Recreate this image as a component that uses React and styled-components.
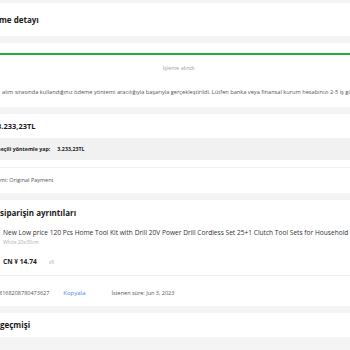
import React from "react";
import styled, { createGlobalStyle } from "styled-components";

const GlobalStyle = createGlobalStyle`
  body {
    margin: 0;
    font-family: "Open Sans", "Liberation Sans", sans-serif;
    background: #f4f4f4;
  }
`;

// the page is wider than the window: its left part is cut off
const Viewport = styled.div`
  width: 350px;
  height: 350px;
  overflow: hidden;
  background: #f4f4f4;
`;

const Page = styled.div`
  padding-top: 3px;
  display: flex;
  flex-direction: column;
  gap: 7px;
`;

const Card = styled.section`
  background: #fff;
  display: flex;
  flex-direction: column;
  padding-top: ${(p) => p.$top || "0"};
  height: ${(p) => p.$h || "auto"};
  box-sizing: border-box;
`;

// text that sits left of the window edge
const Lead = styled.span`
  display: inline-flex;
  justify-content: flex-end;
  width: 0;
  white-space: nowrap;
`;

const Line = styled.div`
  margin-left: ${(p) => p.$x || "0"};
  white-space: nowrap;
`;

const Title = styled(Line)`
  font-size: 8px;
  font-weight: 700;
  color: #1a1a1a;
  line-height: ${(p) => p.$lh || "33px"};
`;

const GreenLine = styled.div`
  height: 2px;
  background: #1fb33c;
`;

const StepLabel = styled.div`
  margin-top: 9px;
  text-align: center;
  padding-left: 7px;
  font-size: 5.5px;
  line-height: 8px;
  color: #a3a3a3;
`;

const Note = styled(Line)`
  margin-top: 16px;
  font-size: 5.65px;
  line-height: 8px;
  color: #555;
`;

const Amount = styled(Line)`
  font-size: 7.5px;
  font-weight: 700;
  color: #1a1a1a;
  line-height: 24px;
`;

const ShadedRow = styled.div`
  display: flex;
  align-items: center;
  height: 22px;
  background: #f1f1f1;
  font-size: 5.3px;
  font-weight: 700;
  color: #222;
  white-space: nowrap;
`;

const RowValue = styled.span`
  margin-left: ${(p) => p.$x};
`;

const Divider = styled.div`
  height: 1px;
  margin-top: ${(p) => p.$mt || "0"};
  background: #f0f0f0;
`;

const InfoLine = styled(Line)`
  display: flex;
  align-items: center;
  height: ${(p) => p.$h || "24px"};
  padding-top: ${(p) => p.$top || "0"};
  box-sizing: border-box;
  font-size: 5.5px;
  color: #555;
`;

const Product = styled.div`
  display: flex;
  gap: 8px;
  margin: 1px 0 0 -53px;
`;

const Thumb = styled.div`
  width: 48px;
  height: 48px;
  flex: none;
  background: #eee;
`;

const ProductInfo = styled.div`
  display: flex;
  flex-direction: column;
`;

const ProductName = styled.div`
  font-size: 6.6px;
  color: #333;
  white-space: nowrap;
  line-height: 11px;
`;

const Variant = styled.div`
  font-size: 5px;
  color: #b0b0b0;
  line-height: 9px;
`;

const PriceRow = styled.div`
  display: flex;
  align-items: baseline;
  gap: 12px;
  margin-top: 10px;
  line-height: 9px;
`;

const Price = styled.span`
  font-size: 6.6px;
  font-weight: 700;
  color: #222;
`;

const Qty = styled.span`
  font-size: 5px;
  color: #aaa;
`;

const Copy = styled.span`
  margin: 0 26px 0 14px;
  font-size: 6px;
  color: #4d86e8;
`;

export default function App() {
  return (
    <>
      <GlobalStyle />
      <Viewport>
        <Page>
          <Card $h="33px">
            <Title $x="-1px">
              <Lead>Geri öde</Lead>me detayı
            </Title>
          </Card>

          <Card $top="10px" $h="64px">
            <GreenLine />
            <StepLabel>İşleme alındı</StepLabel>
            <Note $x="2px">
              <Lead>Geri ödemeniz,{"\u00a0\u00a0"}</Lead>alım sırasında kullandığınız ödeme yöntemi aracılığıyla başarıyla
              gerçekleştirildi. Lütfen banka veya finansal kurum hesabınızı 2-5 iş günü içinde kontrol edin.
            </Note>
          </Card>

          <Card $h="79px">
            <Amount $x="-3px">
              <Lead>Geri ödeme tutarı:{"\u00a0"}</Lead>3.233,23TL
            </Amount>
            <ShadedRow>
              <Line $x="-2px">
                <Lead>Geri ödemeyi{"\u00a0"}</Lead>seçili yöntemle yap:
              </Line>
              <RowValue $x="7px">3.233,23TL</RowValue>
            </ShadedRow>
            <Divider $mt="7px" />
            <InfoLine $h="24px">
              <Lead>Geri ödeme yönte</Lead>mi: Original Payment
            </InfoLine>
          </Card>

          <Card $h="106px">
            <Title $lh="26px">
              <Lead>İade edilen{"\u00a0"}</Lead>siparişin ayrıntıları
            </Title>
            <Product>
              <Thumb />
              <ProductInfo>
                <ProductName>
                  New Low price 120 Pcs Home Tool Kit with Drill 20V Power Drill Cordless Set 25+1 Clutch Tool Sets for Household
                </ProductName>
                <Variant>White 20x30cm</Variant>
                <PriceRow>
                  <Price>CN ¥ 14.74</Price>
                  <Qty>x9</Qty>
                </PriceRow>
              </ProductInfo>
            </Product>
            <Divider $mt="0" />
            <InfoLine $x="-1px" $h="30px" $top="3px">
              <span>
                <Lead>Sipariş no:{"\u00a0"}</Lead>8168208780473627
              </span>
              <Copy>Kopyala</Copy>
              <span>İstenen süre: Jun 3, 2023</span>
            </InfoLine>
          </Card>

          <Card $h="24px">
            <Title $lh="24px">
              <Lead>Geri ödeme{"\u00a0"}</Lead>geçmişi
            </Title>
          </Card>
        </Page>
      </Viewport>
    </>
  );
}
